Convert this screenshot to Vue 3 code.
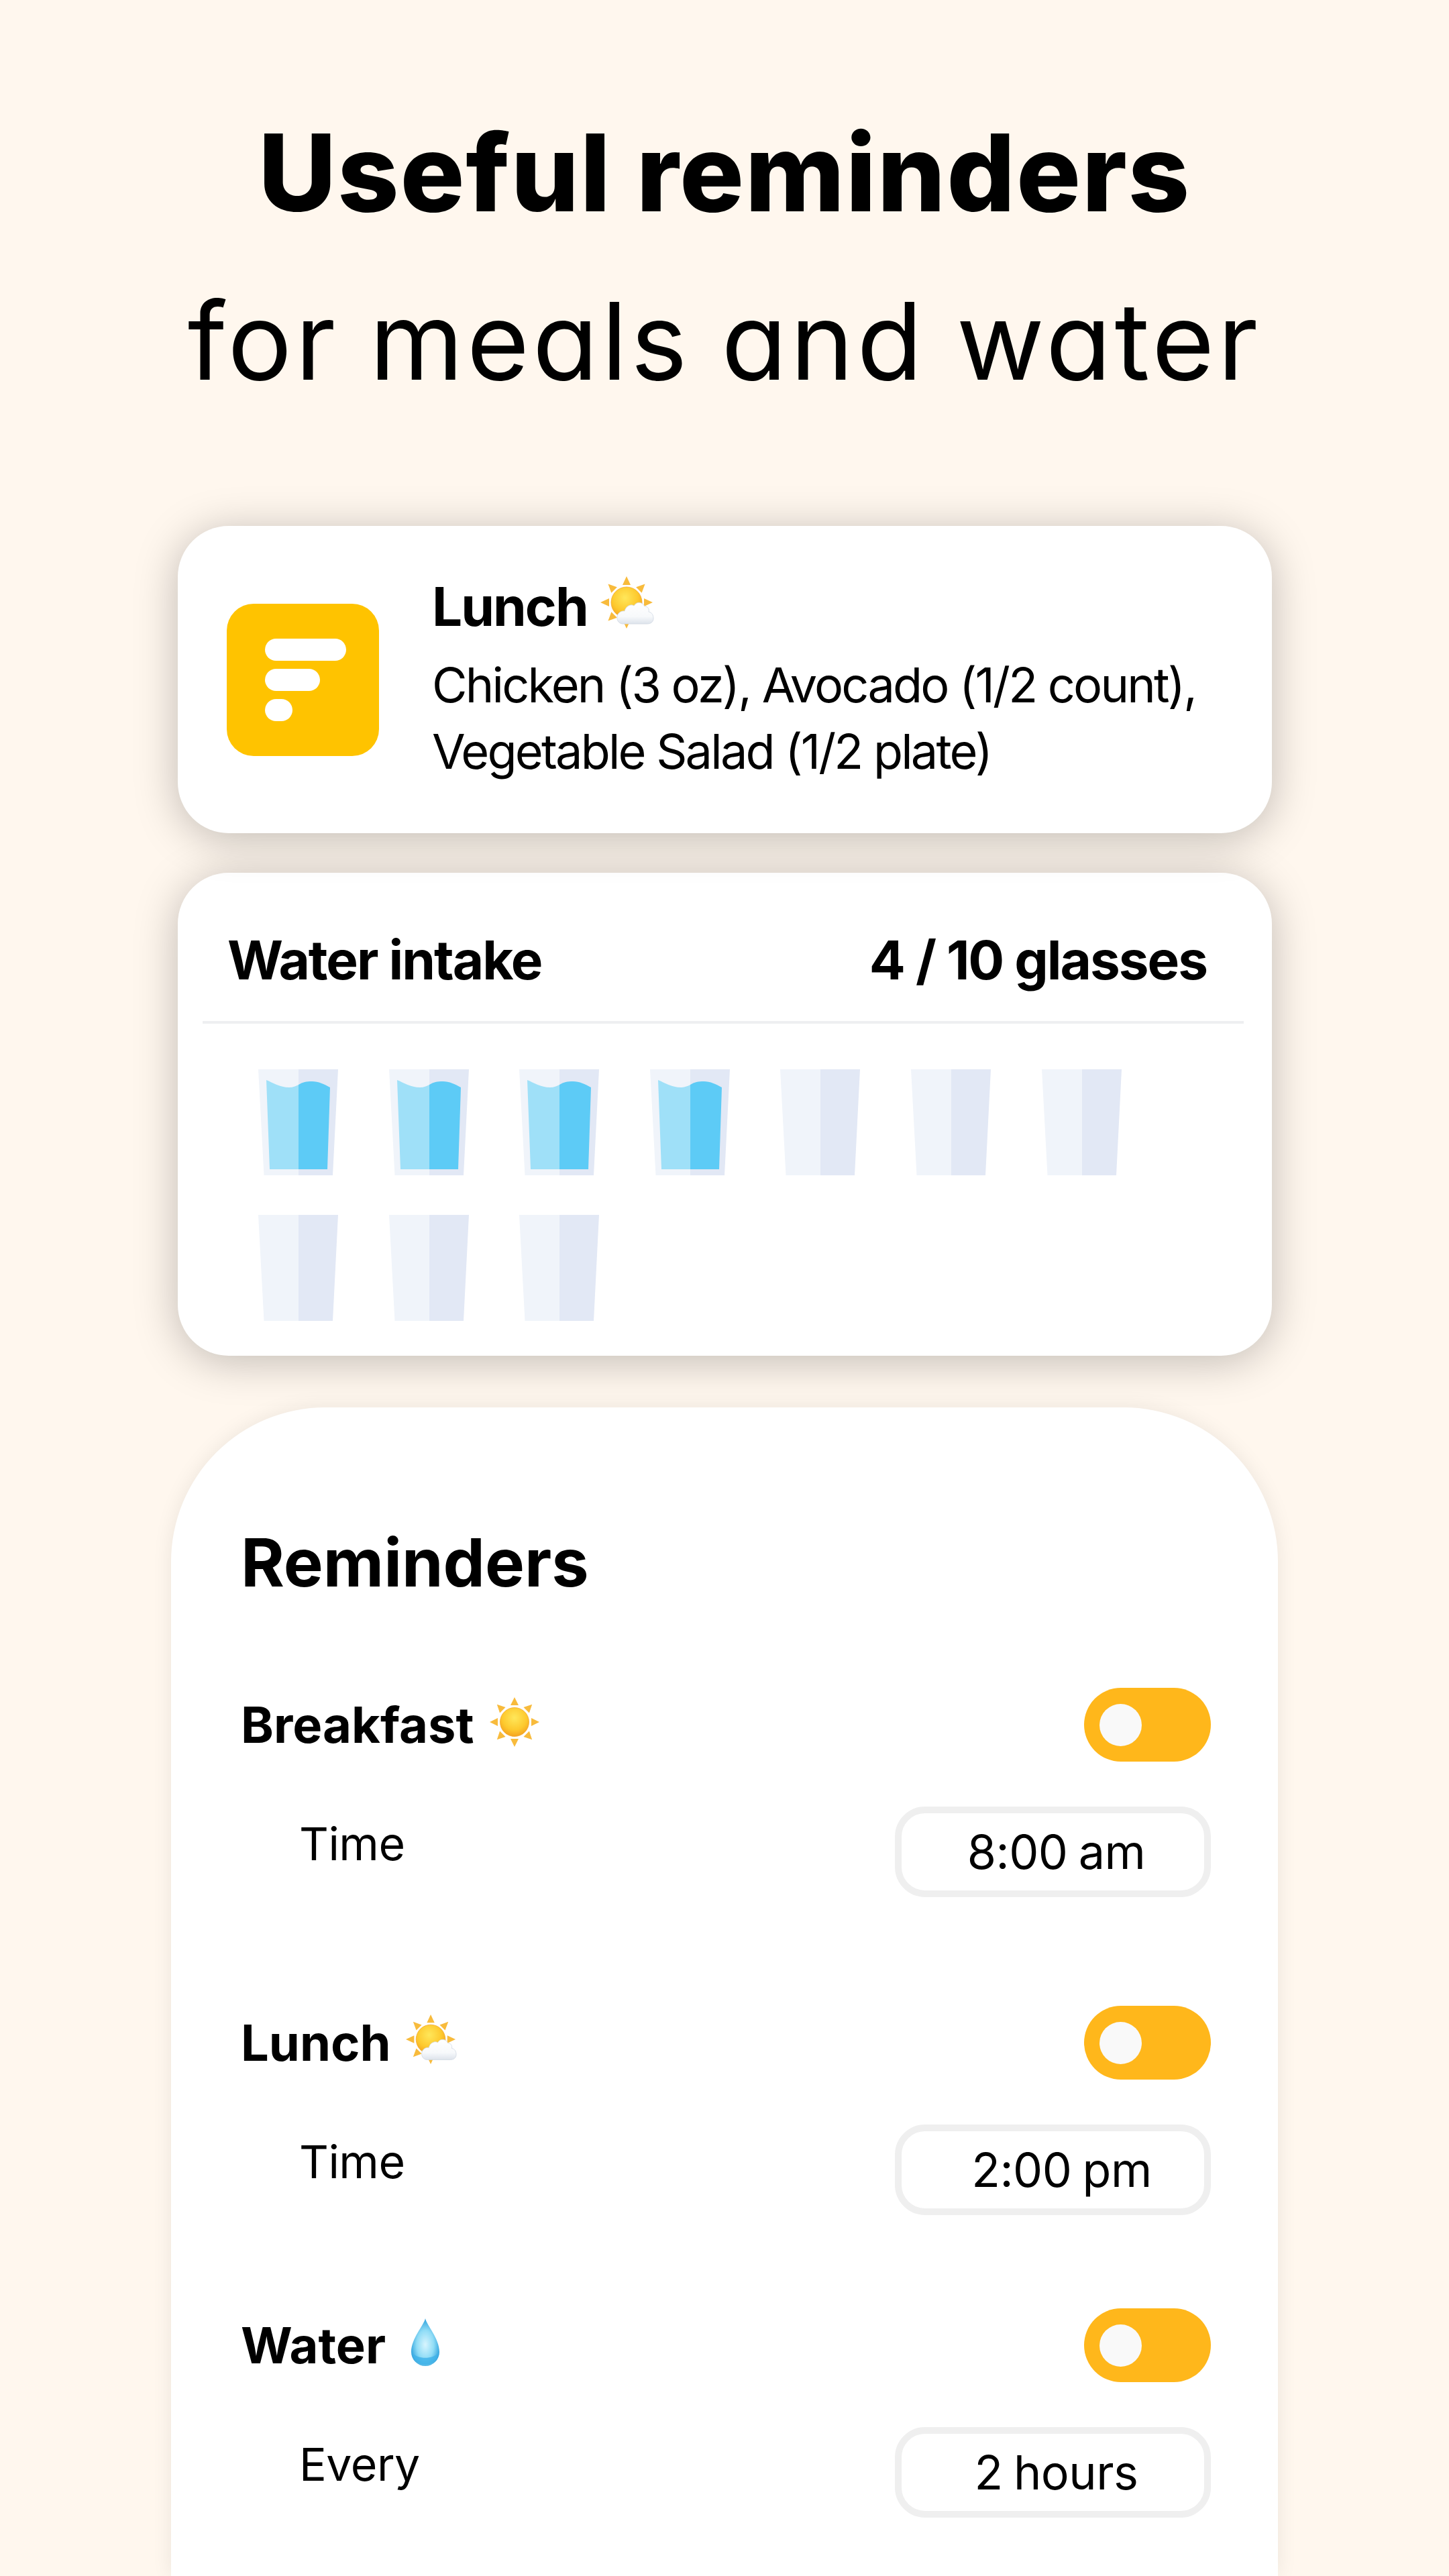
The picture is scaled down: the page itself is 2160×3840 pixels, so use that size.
<template>
  <div class="page">
    <h1 class="title">
      <span class="title-bold">Useful reminders</span>
      <span class="title-light">for meals and water</span>
    </h1>

    <section class="card meal-card">
      <div class="logo">
        <span class="bar bar-l"></span>
        <span class="bar bar-m"></span>
        <span class="bar bar-s"></span>
      </div>
      <div class="meal-text">
        <div class="meal-name">
          Lunch
          <svg class="emoji-cloud" viewBox="0 0 80 80">
            <defs>
              <radialGradient id="sunA" cx="45%" cy="35%" r="70%">
                <stop offset="0" stop-color="#ffe75a" />
                <stop offset="0.6" stop-color="#fdc92e" />
                <stop offset="1" stop-color="#f39a1c" />
              </radialGradient>
              <linearGradient id="cloudA" x1="0" y1="0" x2="0" y2="1">
                <stop offset="0" stop-color="#ffffff" />
                <stop offset="0.65" stop-color="#f7f9fb" />
                <stop offset="1" stop-color="#dde3eb" />
              </linearGradient>
            </defs>
            <polygon v-for="r in rays" :key="r" points="39,0 45,13 33,13" fill="#f8bb3c" :transform="`rotate(${r} 39 39)`" />
            <circle cx="39" cy="39" r="23" fill="url(#sunA)" stroke="#f2a82b" stroke-width="0.8" />
            <path d="M36 71 C28 72 24 66 25 60 C26 54 32 51 36 52 C38 44 46 41 50 44 C54 37 63 38 66 45 C71 45 73 49 72 53 C77 54 79 58 79 63 C79 68 75 71 70 71 Z" fill="url(#cloudA)" stroke="#cfd7e2" stroke-width="0.8" />
          </svg>
        </div>
        <p class="meal-desc">Chicken (3 oz), Avocado (1/2 count),<br />Vegetable Salad (1/2 plate)</p>
      </div>
    </section>

    <section class="card water-card">
      <div class="water-head">
        <span>Water intake</span>
        <span class="water-count">4 / 10 glasses</span>
      </div>
      <div class="divider"></div>
      <div class="glasses">
        <svg v-for="n in 10" :key="n" class="glass" viewBox="0 0 119 158">
          <polygon points="0,0 60,0 60,158 8.5,158" fill="#f0f4fa" />
          <polygon points="60,0 119,0 111,158 60,158" fill="#e2e8f5" />
          <template v-if="n <= 4">
            <path d="M12 16 C22 20 32 27 46 27 C52 27 56 25 60 23 L60 149 L17 149 Z" fill="#9fe0f8" />
            <path d="M60 23 C66 19 72 18 80 18 C90 18 98 22 107 27 L103 149 L60 149 Z" fill="#5dcbf6" />
          </template>
        </svg>
      </div>
    </section>

    <section class="sheet">
      <h2 class="sheet-title">Reminders</h2>

      <div class="reminder">
        <div class="reminder-head">
          <span class="reminder-name">Breakfast</span>
          <svg class="emoji-sun" viewBox="0 0 74 74">
            <defs>
              <radialGradient id="sunB" cx="50%" cy="35%" r="70%">
                <stop offset="0" stop-color="#ffe75a" />
                <stop offset="0.6" stop-color="#fdc92e" />
                <stop offset="1" stop-color="#f39a1c" />
              </radialGradient>
            </defs>
            <polygon v-for="r in rays" :key="r" points="37,0 43,12 31,12" fill="#f8bb3c" :transform="`rotate(${r} 37 37)`" />
            <circle cx="37" cy="37" r="21.5" fill="url(#sunB)" stroke="#f2a82b" stroke-width="0.8" />
          </svg>
          <span class="toggle"><span class="knob"></span></span>
        </div>
        <div class="reminder-body">
          <span class="reminder-label">Time</span>
          <span class="value-box">8:00 am</span>
        </div>
      </div>

      <div class="reminder reminder-lunch">
        <div class="reminder-head">
          <span class="reminder-name">Lunch</span>
          <svg class="emoji-cloud-sm" viewBox="0 0 80 80">
            <defs>
              <radialGradient id="sunC" cx="45%" cy="35%" r="70%">
                <stop offset="0" stop-color="#ffe75a" />
                <stop offset="0.6" stop-color="#fdc92e" />
                <stop offset="1" stop-color="#f39a1c" />
              </radialGradient>
              <linearGradient id="cloudC" x1="0" y1="0" x2="0" y2="1">
                <stop offset="0" stop-color="#ffffff" />
                <stop offset="0.65" stop-color="#f7f9fb" />
                <stop offset="1" stop-color="#dde3eb" />
              </linearGradient>
            </defs>
            <polygon v-for="r in rays" :key="r" points="39,0 45,13 33,13" fill="#f8bb3c" :transform="`rotate(${r} 39 39)`" />
            <circle cx="39" cy="39" r="23" fill="url(#sunC)" stroke="#f2a82b" stroke-width="0.8" />
            <path d="M36 71 C28 72 24 66 25 60 C26 54 32 51 36 52 C38 44 46 41 50 44 C54 37 63 38 66 45 C71 45 73 49 72 53 C77 54 79 58 79 63 C79 68 75 71 70 71 Z" fill="url(#cloudC)" stroke="#cfd7e2" stroke-width="0.8" />
          </svg>
          <span class="toggle"><span class="knob"></span></span>
        </div>
        <div class="reminder-body">
          <span class="reminder-label">Time</span>
          <span class="value-box value-pm">2:00 pm</span>
        </div>
      </div>

      <div class="reminder reminder-water">
        <div class="reminder-head">
          <span class="reminder-name">Water</span>
          <svg class="emoji-drop" viewBox="0 0 42 71">
            <defs>
              <radialGradient id="dropA" cx="50%" cy="55%" r="55%">
                <stop offset="0" stop-color="#d8f5fe" />
                <stop offset="0.55" stop-color="#8fdcf6" />
                <stop offset="1" stop-color="#2a9fdc" />
              </radialGradient>
            </defs>
            <path d="M21 0 C23 10 42 30 42 50 A21 21 0 0 1 0 50 C0 30 19 10 21 0 Z" fill="url(#dropA)" />
            <path d="M3 52 C8 61 34 61 39 52 C39 62 31 69 21 69 C11 69 3 62 3 52 Z" fill="#3fb2e8" opacity="0.8" />
          </svg>
          <span class="toggle"><span class="knob"></span></span>
        </div>
        <div class="reminder-body">
          <span class="reminder-label">Every</span>
          <span class="value-box">2 hours</span>
        </div>
      </div>
    </section>
  </div>
</template>

<script setup>
const rays = [0, 45, 90, 135, 180, 225, 270, 315];
</script>

<style>
html, body { margin: 0; background: #fff7ee; }
</style>

<style scoped>
.page {
  width: 2160px;
  height: 3840px;
  overflow: hidden;
  background: #fff7ee;
  color: #000;
  font-family: Inter, "Liberation Sans", sans-serif;
  display: flex;
  flex-direction: column;
  align-items: center;
}

.title {
  margin: 0;
  padding-top: 132px;
  display: flex;
  flex-direction: column;
  align-items: center;
  font-size: 160px;
  line-height: 251px;
  font-feature-settings: "cv11";
}
.title-bold { font-weight: 800; letter-spacing: 1.7px; }
.title-light { font-weight: 400; letter-spacing: 4.8px; word-spacing: -4px; }

.card {
  width: 1631px;
  margin-left: 1px;
  background: #fff;
  border-radius: 76px;
  box-shadow: 0 8px 64px rgba(0, 0, 0, 0.25);
  box-sizing: border-box;
}

.meal-card {
  position: relative;
  z-index: 1;
  margin-top: 150px;
  height: 458px;
  padding-left: 73px;
  display: flex;
  align-items: center;
  gap: 79px;
}

.logo {
  width: 227px;
  height: 227px;
  box-sizing: border-box;
  padding: 52px 0 0 57px;
  background: #ffc300;
  border-radius: 40px;
  display: flex;
  flex-direction: column;
  gap: 12px;
  flex: none;
}
.bar { display: block; height: 33px; background: #fff; border-radius: 17px; }
.bar-l { width: 121px; }
.bar-m { width: 82px; }
.bar-s { width: 41px; }

.meal-name {
  display: flex;
  align-items: center;
  gap: 19px;
  font-size: 80px;
  font-weight: 700;
  letter-spacing: -2px;
  line-height: 94px;
}
.emoji-cloud { width: 80px; height: 80px; margin-top: -10px; }
.emoji-cloud-sm { width: 76px; height: 76px; margin: -8px 0 0 22px; }
.emoji-sun { width: 74px; height: 74px; margin: -8px 0 0 23px; }
.emoji-drop { width: 42px; height: 71px; margin: -10px 0 0 38px; }

.meal-desc {
  margin: 20px 0 0;
  font-size: 72px;
  line-height: 99px;
  letter-spacing: -2.8px;
}

.water-card {
  margin-top: 59px;
  height: 720px;
  position: relative;
}

.water-head {
  height: 221px;
  padding: 38px 97px 0 74px;
  box-sizing: border-box;
  display: flex;
  justify-content: space-between;
  align-items: center;
  font-size: 80px;
  font-weight: 700;
  letter-spacing: -2px;
}

.divider {
  height: 4px;
  margin: 0 42px 0 37px;
  background: #eeeff1;
}

.glasses {
  margin: 68px 0 0 120px;
  display: grid;
  grid-template-columns: repeat(7, 119px);
  column-gap: 75.6px;
  row-gap: 59px;
}
.glass { width: 119px; height: 158px; display: block; }

.sheet {
  margin-top: 77px;
  width: 1650px;
  flex: 1;
  box-sizing: border-box;
  background: #fff;
  border-radius: 230px 230px 0 0;
  box-shadow: 0 0 30px rgba(0, 0, 0, 0.08);
  padding: 172px 100px 0 104px;
}

.sheet-title {
  margin: 0 0 128px;
  font-size: 99px;
  line-height: 118px;
  font-weight: 700;
}

.reminder-lunch { margin-top: 162px; }
.reminder-water { margin-top: 139px; }

.reminder-head {
  display: flex;
  align-items: center;
  height: 110px;
}
.reminder-name {
  font-size: 74px;
  font-weight: 700;
}

.toggle {
  margin-left: auto;
  width: 189px;
  height: 110px;
  box-sizing: border-box;
  padding-left: 23px;
  background: #ffb71b;
  border-radius: 55px;
  display: flex;
  align-items: center;
}
.knob {
  width: 63px;
  height: 63px;
  background: #f9f9f9;
  border-radius: 50%;
}

.reminder-body {
  margin-top: 67px;
  padding-left: 87px;
  display: flex;
  justify-content: space-between;
  align-items: flex-start;
}
.reminder-label {
  margin-top: 14px;
  font-size: 68px;
  line-height: 82px;
  letter-spacing: -0.5px;
}

.value-box {
  width: 471px;
  height: 135px;
  box-sizing: border-box;
  border: 10px solid #efefef;
  border-radius: 45px;
  padding-left: 10px;
  display: flex;
  align-items: center;
  justify-content: center;
  font-size: 70px;
  letter-spacing: -0.5px;
  word-spacing: -3px;
}
.value-pm { padding-left: 26px; }
</style>
